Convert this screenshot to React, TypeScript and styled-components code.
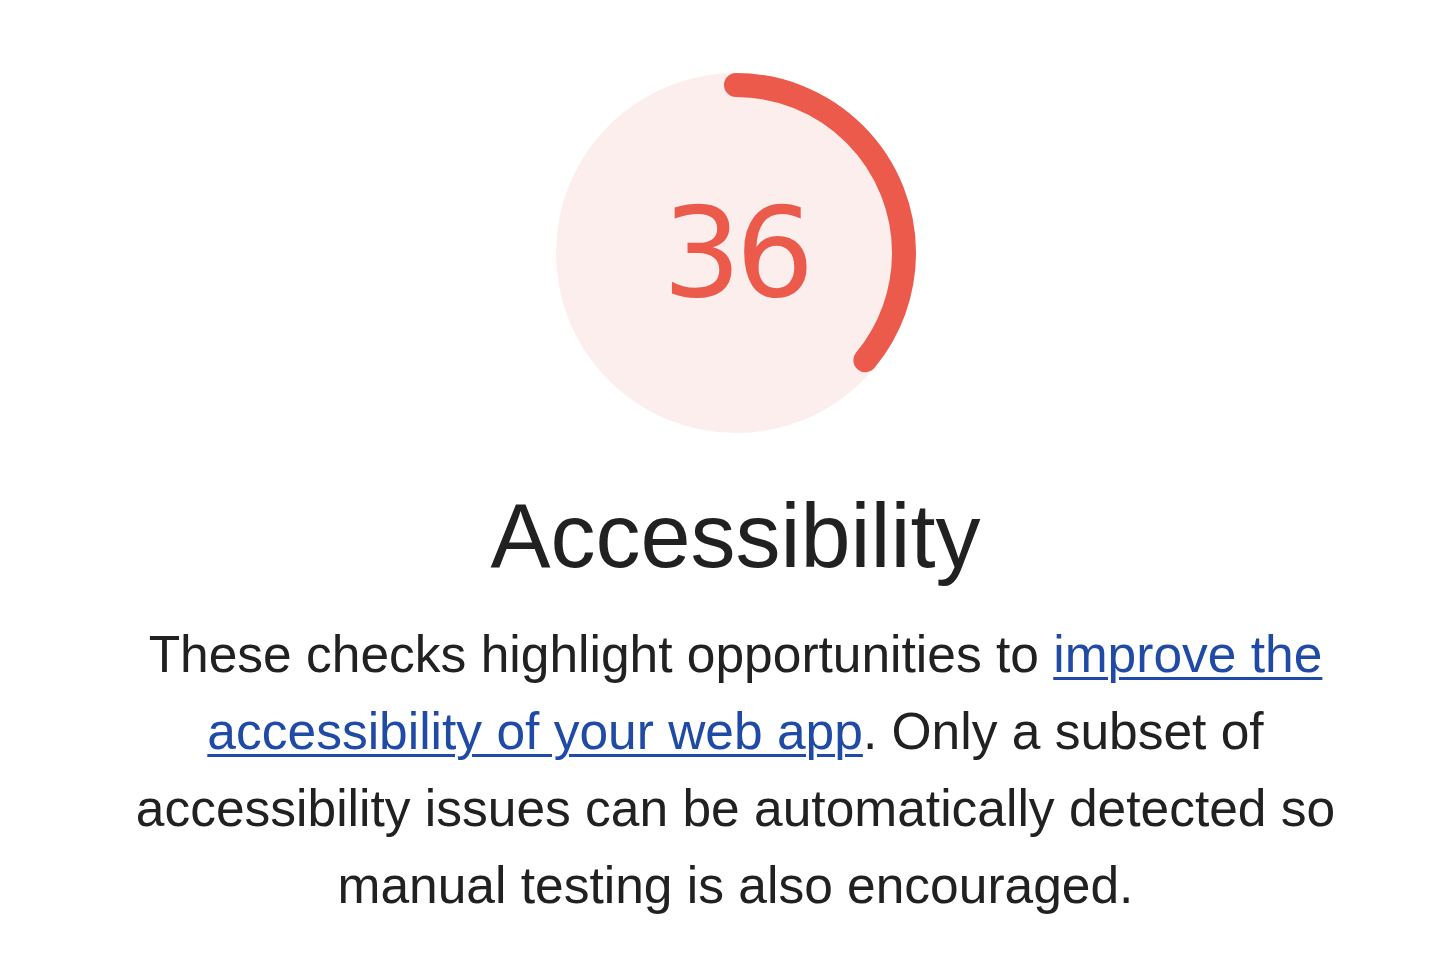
import React from "react";
import styled, { createGlobalStyle } from "styled-components";

const GlobalStyle = createGlobalStyle`
  body {
    margin: 0;
    background: #ffffff;
    font-family: "Liberation Sans", Arial, sans-serif;
  }
`;

const Page = styled.div`
  display: flex;
  flex-direction: column;
  align-items: center;
  padding: 73px 0 0 31px;
`;

const GaugeWrap = styled.div`
  position: relative;
  width: 360px;
  height: 360px;
`;

const GaugeValue = styled.div`
  position: absolute;
  inset: 0;
  display: flex;
  align-items: center;
  justify-content: center;
  font-family: "DejaVu Sans", Verdana, sans-serif;
  font-size: 124px;
  letter-spacing: -6px;
  line-height: 1;
  color: #eb5a4a;
  padding: 0;
`;

const Title = styled.h1`
  margin: 58px 0 0;
  font-size: 90px;
  font-weight: 400;
  line-height: 1;
  color: #212121;
`;

const Description = styled.p`
  margin: 35px 0 0;
  max-width: 1300px;
  text-align: center;
  font-size: 51.5px;
  line-height: 77px;
  color: #212121;
`;

const Link = styled.a`
  color: #1f4ba6;
  text-decoration: underline;
  text-decoration-thickness: 3px;
  text-underline-offset: 5px;
`;

interface GaugeProps {
  score: number;
}

const Gauge: React.FC<GaugeProps> = ({ score }) => {
  const r = 168;
  const circ = 2 * Math.PI * r;
  const len = (score / 100) * circ;
  return (
    <GaugeWrap>
      <svg width="360" height="360" viewBox="0 0 360 360">
        <circle cx="180" cy="180" r="180" fill="#fceeec" />
        <circle
          cx="180"
          cy="180"
          r={r}
          fill="none"
          stroke="#eb5a4a"
          strokeWidth="24"
          strokeLinecap="round"
          strokeDasharray={`${len} ${circ}`}
          transform="rotate(-90 180 180)"
        />
      </svg>
      <GaugeValue>{score}</GaugeValue>
    </GaugeWrap>
  );
};

const App: React.FC = () => {
  return (
    <>
      <GlobalStyle />
      <Page>
        <Gauge score={36} />
        <Title>Accessibility</Title>
        <Description>
          These checks highlight opportunities to{" "}
          <Link href="#">improve the accessibility of your web app</Link>. Only
          a subset of accessibility issues can be automatically detected so
          manual testing is also encouraged.
        </Description>
      </Page>
    </>
  );
};

export default App;
